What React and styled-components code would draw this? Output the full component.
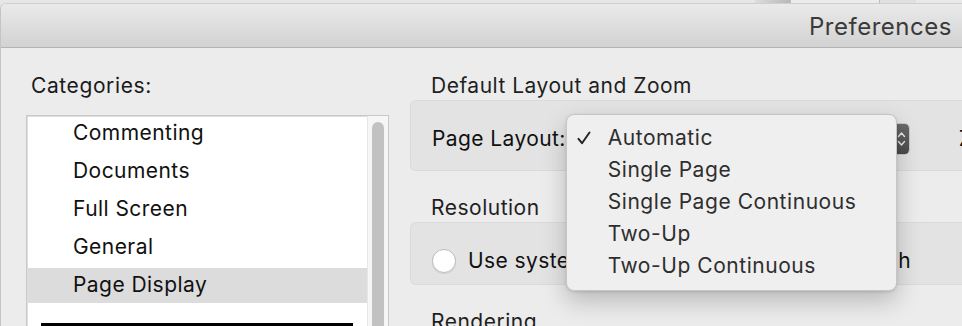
import styled, { createGlobalStyle } from 'styled-components'

const categories = ['Commenting', 'Documents', 'Full Screen', 'General', 'Page Display']
const layouts = ['Automatic', 'Single Page', 'Single Page Continuous', 'Two-Up', 'Two-Up Continuous']

const App = () => {
  return (
    <Screen>
      <GlobalStyle />
      <Backdrop>
        <BackSeg $w={755} $bg="#e6e6e6" />
        <BackSeg $w={35} $bg="linear-gradient(90deg, #dcdcdc, #b9b9b9)" />
        <BackSeg $w={88} $bg="#ececec" $line />
        <BackSeg $w={36} $bg="#e0e0e0" $line />
        <BackSeg $w={48} $bg="#e9e9e9" />
      </Backdrop>
      <Window>
        <TitleBar>
          <Title>Preferences</Title>
        </TitleBar>
        <Body>
          <Sidebar>
            <Label>Categories:</Label>
            <ListBox>
              <Rows>
                {categories.map((c) => (
                  <Row key={c} $selected={c === 'Page Display'}>
                    {c}
                  </Row>
                ))}
                <Divider />
              </Rows>
              <ScrollTrack>
                <Thumb />
              </ScrollTrack>
            </ListBox>
          </Sidebar>
          <Content>
            <SectionTitle>Default Layout and Zoom</SectionTitle>
            <Group $h={71} $pt={6}>
              <FieldLabel>Page Layout:</FieldLabel>
              <PopupWrap>
                <PopupButton>
                  <PopupValue>Automatic</PopupValue>
                  <Stepper>
                    <svg width="9" height="18" viewBox="0 0 9 18" fill="none">
                      <path d="M1.5 6.5 L4.5 3 L7.5 6.5" stroke="#e8e8e8" strokeWidth="1.4" strokeLinecap="round" strokeLinejoin="round" />
                      <path d="M1.5 11.5 L4.5 15 L7.5 11.5" stroke="#e8e8e8" strokeWidth="1.4" strokeLinecap="round" strokeLinejoin="round" />
                    </svg>
                  </Stepper>
                </PopupButton>
                <Menu>
                  {layouts.map((l) => (
                    <MenuItem key={l}>
                      <Check>
                        {l === 'Automatic' && (
                          <svg width="14" height="14" viewBox="0 0 14 14" fill="none">
                            <path d="M1.5 7.8 L5 12.2 L12.5 1.5" stroke="#262626" strokeWidth="2" strokeLinecap="round" strokeLinejoin="round" />
                          </svg>
                        )}
                      </Check>
                      {l}
                    </MenuItem>
                  ))}
                </Menu>
              </PopupWrap>
              <FieldLabel $ml={49}>Zoom:</FieldLabel>
            </Group>
            <SectionTitle>Resolution</SectionTitle>
            <Group $h={63} $pt={14}>
              <Radio />
              <FieldLabel $ml={12}>Use system setting:</FieldLabel>
              <FieldLabel $ml={86}>144 pixels/inch</FieldLabel>
            </Group>
            <SectionTitle>Rendering</SectionTitle>
          </Content>
        </Body>
      </Window>
    </Screen>
  )
}

const GlobalStyle = createGlobalStyle`
  html, body {
    margin: 0;
    padding: 0;
    background: #ececec;
  }
  body {
    font-family: Inter, "Liberation Sans", sans-serif;
    -webkit-font-smoothing: antialiased;
  }
`

const Screen = styled.div`
  width: 962px;
  height: 326px;
  overflow: hidden;
  background: #e6e6e6;
`

const Backdrop = styled.div`
  display: flex;
  height: 3px;
`

const BackSeg = styled.div`
  width: ${(p) => p.$w}px;
  flex-shrink: 0;
  background: ${(p) => p.$bg};
  border-left: ${(p) => (p.$line ? '1px solid #bdbdbd' : 'none')};
`

const Window = styled.div`
  width: 1100px;
  border-radius: 6px 6px 0 0;
  border-left: 1px solid #c4c4c4;
  border-top: 1px solid #cfcfcf;
  background: #ececec;
  overflow: hidden;
`

const TitleBar = styled.div`
  height: 43px;
  display: flex;
  align-items: center;
  padding-left: 808px;
  background: linear-gradient(#eaeaea, #d2d2d2);
  border-bottom: 1px solid #b4b4b4;
`

const Title = styled.div`
  font-size: 24px;
  color: #3a3a3a;
  letter-spacing: 0.5px;
  padding-top: 1px;
`

const Body = styled.div`
  display: grid;
  grid-template-columns: 363px 1fr;
  column-gap: 21px;
  padding-left: 25px;
  height: 300px;
`

const Sidebar = styled.div`
  display: flex;
  flex-direction: column;
`

const Label = styled.div`
  margin: 26px 0 17px 5px;
  font-size: 21px;
  line-height: 24px;
  color: #1a1a1a;
  letter-spacing: 0.6px;
`

const ListBox = styled.div`
  flex: 1;
  display: flex;
  background: #fff;
  border: 1px solid #c9c9c9;
  border-bottom: none;
  box-shadow: inset 0 0 0 1px #dedede;
`

const Rows = styled.div`
  flex: 1;
  display: flex;
  flex-direction: column;
  gap: 3px;
  padding: 0 0 0 1px;
`

const Row = styled.div`
  height: 35px;
  display: flex;
  align-items: center;
  padding-left: 45px;
  padding-bottom: 3px;
  box-sizing: border-box;
  font-size: 21px;
  color: #111;
  letter-spacing: 0.45px;
  background: ${(p) => (p.$selected ? '#dcdcdc' : 'transparent')};
`

const Divider = styled.div`
  height: 4px;
  margin: 17px 14px 0 13px;
  background: #000;
`

const ScrollTrack = styled.div`
  width: 20px;
  background: #f6f6f6;
  border-left: 1px solid #e6e6e6;
  display: flex;
  justify-content: center;
  padding-top: 6px;
`

const Thumb = styled.div`
  width: 12px;
  height: 400px;
  border-radius: 6px;
  background: #c2c2c2;
`

const Content = styled.div`
  display: flex;
  flex-direction: column;
`

const SectionTitle = styled.div`
  margin: 25px 0 2px 21px;
  font-size: 21px;
  line-height: 24px;
  color: #1f1f1f;
  letter-spacing: 0.5px;
  &:first-child {
    margin-top: 26px;
  }
`

const Group = styled.div`
  height: ${(p) => p.$h}px;
  box-sizing: border-box;
  padding: ${(p) => p.$pt}px 0 0 21px;
  display: flex;
  align-items: center;
  background: #e3e3e3;
  border: 1px solid #dadada;
  border-right: none;
  border-radius: 6px 0 0 6px;
`

const FieldLabel = styled.div`
  margin-left: ${(p) => p.$ml || 0}px;
  font-size: 21px;
  color: #111;
  letter-spacing: 0.4px;
  white-space: nowrap;
`

const PopupWrap = styled.div`
  position: relative;
  margin-left: 8px;
`

const PopupButton = styled.div`
  width: 336px;
  height: 32px;
  box-sizing: border-box;
  display: flex;
  align-items: center;
  justify-content: space-between;
  background: #fff;
  border: 1px solid #c8c8c8;
  border-radius: 5px;
  overflow: hidden;
  font-size: 20px;
`

const PopupValue = styled.span`
  padding-left: 10px;
`

const Stepper = styled.div`
  width: 14px;
  height: 32px;
  display: flex;
  align-items: center;
  justify-content: center;
  background: linear-gradient(#6a6a6a, #4a4a4a);
  border-radius: 0 5px 5px 0;
`

const Menu = styled.div`
  position: absolute;
  left: -8px;
  top: -9px;
  width: 331px;
  height: 177px;
  box-sizing: border-box;
  padding-top: 7px;
  background: #efefef;
  border: 1px solid #c6c6c6;
  border-radius: 8px;
  box-shadow: 0 10px 24px rgba(0, 0, 0, 0.22), 0 1px 3px rgba(0, 0, 0, 0.12);
`

const MenuItem = styled.div`
  height: 32px;
  display: flex;
  align-items: center;
  font-size: 21px;
  color: #2e2e2e;
  letter-spacing: 0.55px;
  white-space: nowrap;
`

const Check = styled.span`
  width: 41px;
  height: 32px;
  padding-left: 10px;
  box-sizing: border-box;
  display: flex;
  align-items: center;
`

const Radio = styled.div`
  width: 24px;
  height: 24px;
  box-sizing: border-box;
  border-radius: 50%;
  background: #fff;
  border: 1px solid #bdbdbd;
  box-shadow: 0 1px 1px rgba(0, 0, 0, 0.08);
  flex-shrink: 0;
`

export default App
